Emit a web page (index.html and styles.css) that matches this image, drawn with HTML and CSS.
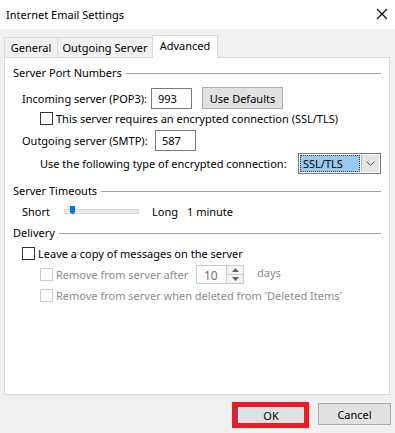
FILE: index.html
```html
<!DOCTYPE html>
<html lang="en">

<head>
    <meta charset="UTF-8">
    <meta name="viewport" content="width=device-width, initial-scale=1.0">
    <title>Internet Email Settings</title>
    <link rel="stylesheet" href="styles.css">
</head>

<body>
    <div class="window">
        <div class="titlebar">
            <span class="title">Internet Email Settings</span>
            <svg class="close" width="12" height="12" viewBox="0 0 12 12">
                <path d="M1 1 L11 11 M11 1 L1 11" stroke="#000" stroke-width="1.1" fill="none" />
            </svg>
        </div>

        <div class="dialog">
            <div class="tabs">
                <div class="tab tab-general">General</div>
                <div class="tab tab-outgoing">Outgoing Server</div>
                <div class="tab tab-advanced active">Advanced</div>
            </div>

            <div class="panel">
                <div class="group-title"><span>Server Port Numbers</span></div>

                <div class="row row-incoming">
                    <label class="label-incoming">Incoming server (POP3):</label>
                    <input type="text" class="port" value="993">
                    <button class="btn btn-defaults">Use Defaults</button>
                </div>
                <div class="row row-check indent">
                    <span class="checkbox"></span>
                    <span>This server requires an encrypted connection (SSL/TLS)</span>
                </div>
                <div class="row row-outgoing">
                    <label class="label-outgoing">Outgoing server (SMTP):</label>
                    <input type="text" class="port" value="587">
                </div>
                <div class="row row-encrypt indent">
                    <span class="label-encrypt">Use the following type of encrypted connection:</span>
                    <div class="combo">
                        <span class="combo-value"><span>SSL/TLS</span></span>
                        <span class="combo-arrow">
                            <svg width="9" height="5" viewBox="0 0 9 5">
                                <path d="M0.5 0.5 L4.5 4.5 L8.5 0.5" stroke="#555" fill="none" />
                            </svg>
                        </span>
                    </div>
                </div>

                <div class="group-title group-timeouts"><span>Server Timeouts</span></div>
                <div class="row row-timeout">
                    <span class="label-short">Short</span>
                    <div class="slider">
                        <span class="slider-thumb"></span>
                    </div>
                    <span class="label-long">Long</span>
                    <span>1 minute</span>
                </div>

                <div class="group-title group-delivery"><span>Delivery</span></div>
                <div class="row row-leave">
                    <span class="checkbox"></span>
                    <span>Leave a copy of messages on the server</span>
                </div>
                <div class="row row-remove indent disabled">
                    <span class="checkbox"></span>
                    <span class="label-remove">Remove from server after</span>
                    <div class="spin">
                        <span class="spin-value">10</span>
                        <span class="spin-buttons">
                            <span class="spin-up">
                                <svg width="7" height="4" viewBox="0 0 7 4"><path d="M0 4 L3.5 0 L7 4 Z" fill="#606060" /></svg>
                            </span>
                            <span class="spin-down">
                                <svg width="7" height="4" viewBox="0 0 7 4"><path d="M0 0 L3.5 4 L7 0 Z" fill="#606060" /></svg>
                            </span>
                        </span>
                    </div>
                    <span class="label-days">days</span>
                </div>
                <div class="row row-deleted indent disabled">
                    <span class="checkbox"></span>
                    <span>Remove from server when deleted from 'Deleted Items'</span>
                </div>
            </div>

            <div class="footer">
                <div class="ok-frame">
                    <button class="btn btn-ok">OK</button>
                </div>
                <button class="btn btn-cancel">Cancel</button>
            </div>
        </div>
    </div>
</body>

</html>
```

FILE: styles.css
```css
body {
    margin: 0;
    font-family: "Noto Sans", "Open Sans", sans-serif;
    font-size: 11px;
    color: #000;
    background-color: #f0f0f0;
}

.window {
    width: 395px;
    height: 433px;
    overflow: hidden;
    white-space: nowrap;
}

.titlebar {
    height: 29px;
    background-color: #fff;
    display: flex;
    align-items: center;
    justify-content: space-between;
    padding: 0 7px 0 6px;
}

.title {
    font-size: 11px;
    margin-top: -1px;
}

.close {
    margin-top: -1px;
}

.dialog {
    padding: 6px 5px 0 4px;
}

.tabs {
    display: flex;
    align-items: flex-end;
    height: 22px;
}

.tab {
    height: 20px;
    line-height: 20px;
    text-align: center;
    border: 1px solid #d9d9d9;
    border-bottom: none;
    border-right: none;
    background-color: #f0f0f0;
    box-sizing: border-box;
}

.tab-general {
    width: 53px;
}

.tab-outgoing {
    width: 95px;
}

.tab.active {
    width: 66px;
    height: 23px;
    line-height: 19px;
    background-color: #fff;
    border-right: 1px solid #d9d9d9;
    margin-bottom: -1px;
    position: relative;
}

.panel {
    height: 338px;
    border: 1px solid #d9d9d9;
    background-color: #fff;
    box-sizing: border-box;
    padding: 6px 8px 0 8px;
}

.group-title {
    display: flex;
    align-items: center;
    height: 17px;
}

.group-title::after {
    content: "";
    flex: 1;
    height: 1px;
    background-color: #a0a0a0;
    margin-left: 4px;
    margin-top: 1px;
}

.row {
    display: flex;
    align-items: center;
    padding-left: 9px;
}

.row.indent {
    padding-left: 27px;
}

.row > span,
.row > label {
    flex-shrink: 0;
}

.row-incoming {
    margin-top: 6px;
    height: 22px;
}

.label-incoming {
    width: 129px;
}

.port {
    width: 41px;
    height: 21px;
    box-sizing: border-box;
    border: 1px solid #7a7a7a;
    font-family: inherit;
    font-size: 11px;
    padding: 0 6px;
    outline: none;
}

.btn {
    font-family: inherit;
    font-size: 11px;
    color: #000;
    background-color: #e1e1e1;
    border: 1px solid #adadad;
    box-sizing: border-box;
    padding: 0;
}

.btn-defaults {
    width: 81px;
    height: 22px;
    margin-left: 10px;
}

.row-check {
    margin-top: 1px;
    height: 16px;
}

.checkbox {
    width: 13px;
    height: 13px;
    box-sizing: border-box;
    border: 1px solid #333;
    background-color: #fff;
    margin-right: 3px;
}

.row-outgoing {
    margin-top: 4px;
    height: 21px;
}

.label-outgoing {
    width: 133px;
}

.row-encrypt {
    margin-top: 2px;
    height: 21px;
}

.label-encrypt {
    width: 258px;
}

.combo {
    display: flex;
    width: 84px;
    height: 21px;
    box-sizing: border-box;
    border: 1px solid #7a7a7a;
    background-color: #fff;
    padding: 1px;
}

.combo-value {
    flex: 1;
    background-color: #99c9ef;
    border: 1px dotted #333;
    display: flex;
    align-items: center;
    padding-left: 2px;
    line-height: 1;
}

.combo-arrow {
    width: 17px;
    margin-left: 1px;
    background-color: #e5e5e5;
    border-left: 1px solid #c0c0c0;
    display: flex;
    align-items: center;
    justify-content: center;
}

.group-timeouts {
    margin-top: 8px;
}

.row-timeout {
    margin-top: 2px;
    height: 20px;
}

.label-short {
    width: 42px;
}

.slider {
    position: relative;
    width: 73px;
    height: 3px;
    background-color: #e7e7e7;
    border: 1px solid #d6d6d6;
    margin-right: 13px;
    flex-shrink: 0;
}

.slider-thumb {
    position: absolute;
    left: 5px;
    top: -4px;
    width: 5px;
    height: 9px;
    background-color: #0078d7;
    clip-path: polygon(0 0, 100% 0, 100% 75%, 50% 100%, 0 75%);
}

.label-long {
    width: 35px;
}

.group-delivery {
    margin-top: 3px;
}

.row-leave {
    margin-top: 5px;
    height: 15px;
}

.disabled {
    color: #8c8c8c;
}

.disabled .checkbox {
    border-color: #cccccc;
}

.row-remove {
    margin-top: 3px;
    height: 20px;
}

.label-remove {
    width: 140px;
}

.spin {
    display: flex;
    width: 48px;
    height: 19px;
    box-sizing: border-box;
    border: 1px solid #cccccc;
    background-color: #fff;
    flex-shrink: 0;
}

.spin-value {
    flex: 1;
    padding-left: 7px;
    color: #6d6d6d;
    line-height: 19px;
    font-size: 12px;
}

.spin-buttons {
    width: 16px;
    display: flex;
    flex-direction: column;
    border-left: 1px solid #cccccc;
}

.spin-up,
.spin-down {
    flex: 1;
    display: flex;
    align-items: center;
    justify-content: center;
    background-color: #f4f4f4;
}

.spin-up {
    border-bottom: 1px solid #cccccc;
}

.label-days {
    margin-left: 13px;
    margin-top: -4px;
}

.row-deleted {
    margin-top: 3px;
    height: 17px;
}

.footer {
    display: flex;
    justify-content: flex-end;
    align-items: flex-start;
    gap: 9px;
    margin-top: 7px;
    margin-right: -1px;
}

.ok-frame {
    width: 77px;
    height: 26px;
    box-sizing: border-box;
    border: 5px solid #ed1c24;
    background-color: #e1e1e1;
}

.btn-ok {
    width: 100%;
    height: 100%;
    border: none;
    border-left: 1px solid #0078d7;
    display: block;
}

.btn-cancel {
    width: 73px;
    height: 22px;
    margin-top: 1px;
}
```
